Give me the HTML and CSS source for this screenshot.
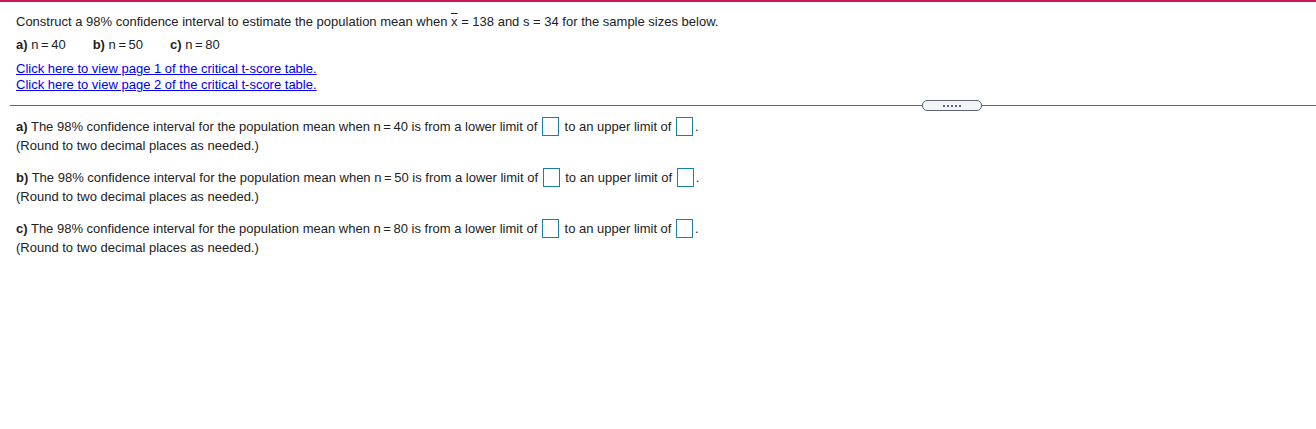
FILE: index.html
```html
<!DOCTYPE html>
<html>
<head>
<meta charset="utf-8">
<link rel="stylesheet" href="styles.css">
</head>
<body>
<div class="topbar"></div>
<div class="question">
  <p class="intro">Construct a 98% confidence interval to estimate the population mean when <span class="xbar">x</span> = 138 and s = 34 for the sample sizes below.</p>
  <div class="sizes">
    <span class="size"><b>a)</b> n&#8201;=&#8201;40</span>
    <span class="size"><b>b)</b> n&#8201;=&#8201;50</span>
    <span class="size"><b>c)</b> n&#8201;=&#8201;80</span>
  </div>
  <div class="links">
    <a href="#">Click here to view page 1 of the critical t-score table.</a>
    <a href="#">Click here to view page 2 of the critical t-score table.</a>
  </div>
</div>
<div class="divider">
  <div class="pill"><span></span><span></span><span></span><span></span><span></span></div>
</div>
<div class="answers">
  <div class="part">
    <div class="line"><b>a)</b> The 98% confidence interval for the population mean when n&#8201;=&#8201;40 is from a lower limit of <span class="box"></span> to an upper limit of <span class="box"></span>.</div>
    <div class="note">(Round to two decimal places as needed.)</div>
  </div>
  <div class="part">
    <div class="line"><b>b)</b> The 98% confidence interval for the population mean when n&#8201;=&#8201;50 is from a lower limit of <span class="box"></span> to an upper limit of <span class="box"></span>.</div>
    <div class="note">(Round to two decimal places as needed.)</div>
  </div>
  <div class="part">
    <div class="line"><b>c)</b> The 98% confidence interval for the population mean when n&#8201;=&#8201;80 is from a lower limit of <span class="box"></span> to an upper limit of <span class="box"></span>.</div>
    <div class="note">(Round to two decimal places as needed.)</div>
  </div>
</div>
</body>
</html>
```

FILE: styles.css
```css
html, body {
  margin: 0;
  padding: 0;
  background: #fff;
}
body {
  font-family: "Liberation Sans", Arial, sans-serif;
  font-size: 13px;
  color: #222;
}
.topbar {
  height: 2px;
  background: #c8185a;
}
.question {
  padding: 12px 16px 0 16px;
}
.intro {
  margin: 0;
  line-height: 16px;
}
.xbar {
  text-decoration: overline;
}
.sizes {
  display: flex;
  gap: 27px;
  margin-top: 7px;
  line-height: 16px;
}
.links {
  display: flex;
  flex-direction: column;
  align-items: flex-start;
  margin-top: 8px;
  line-height: 16px;
}
.links a {
  color: #0000ee;
  text-decoration: underline;
}
.divider {
  margin: 12px 0 0 10px;
  height: 1px;
  background: #5f6670;
  position: relative;
}
.pill {
  position: absolute;
  left: 912px;
  top: -5px;
  width: 58px;
  height: 9px;
  border: 1px solid #5f6670;
  border-radius: 5px;
  background: #f2f4f7;
  display: flex;
  justify-content: center;
  align-items: center;
  gap: 2px;
}
.pill span {
  width: 2px;
  height: 2px;
  background: #5f6670;
}
.answers {
  padding: 11px 16px 0 16px;
  display: flex;
  flex-direction: column;
  gap: 13px;
}
.line, .note {
  line-height: 19px;
}
.box {
  display: inline-block;
  width: 15px;
  height: 17px;
  border: 1px solid #1a7fa0;
  vertical-align: middle;
  margin: -3px 2px 0 1px;
}
```
